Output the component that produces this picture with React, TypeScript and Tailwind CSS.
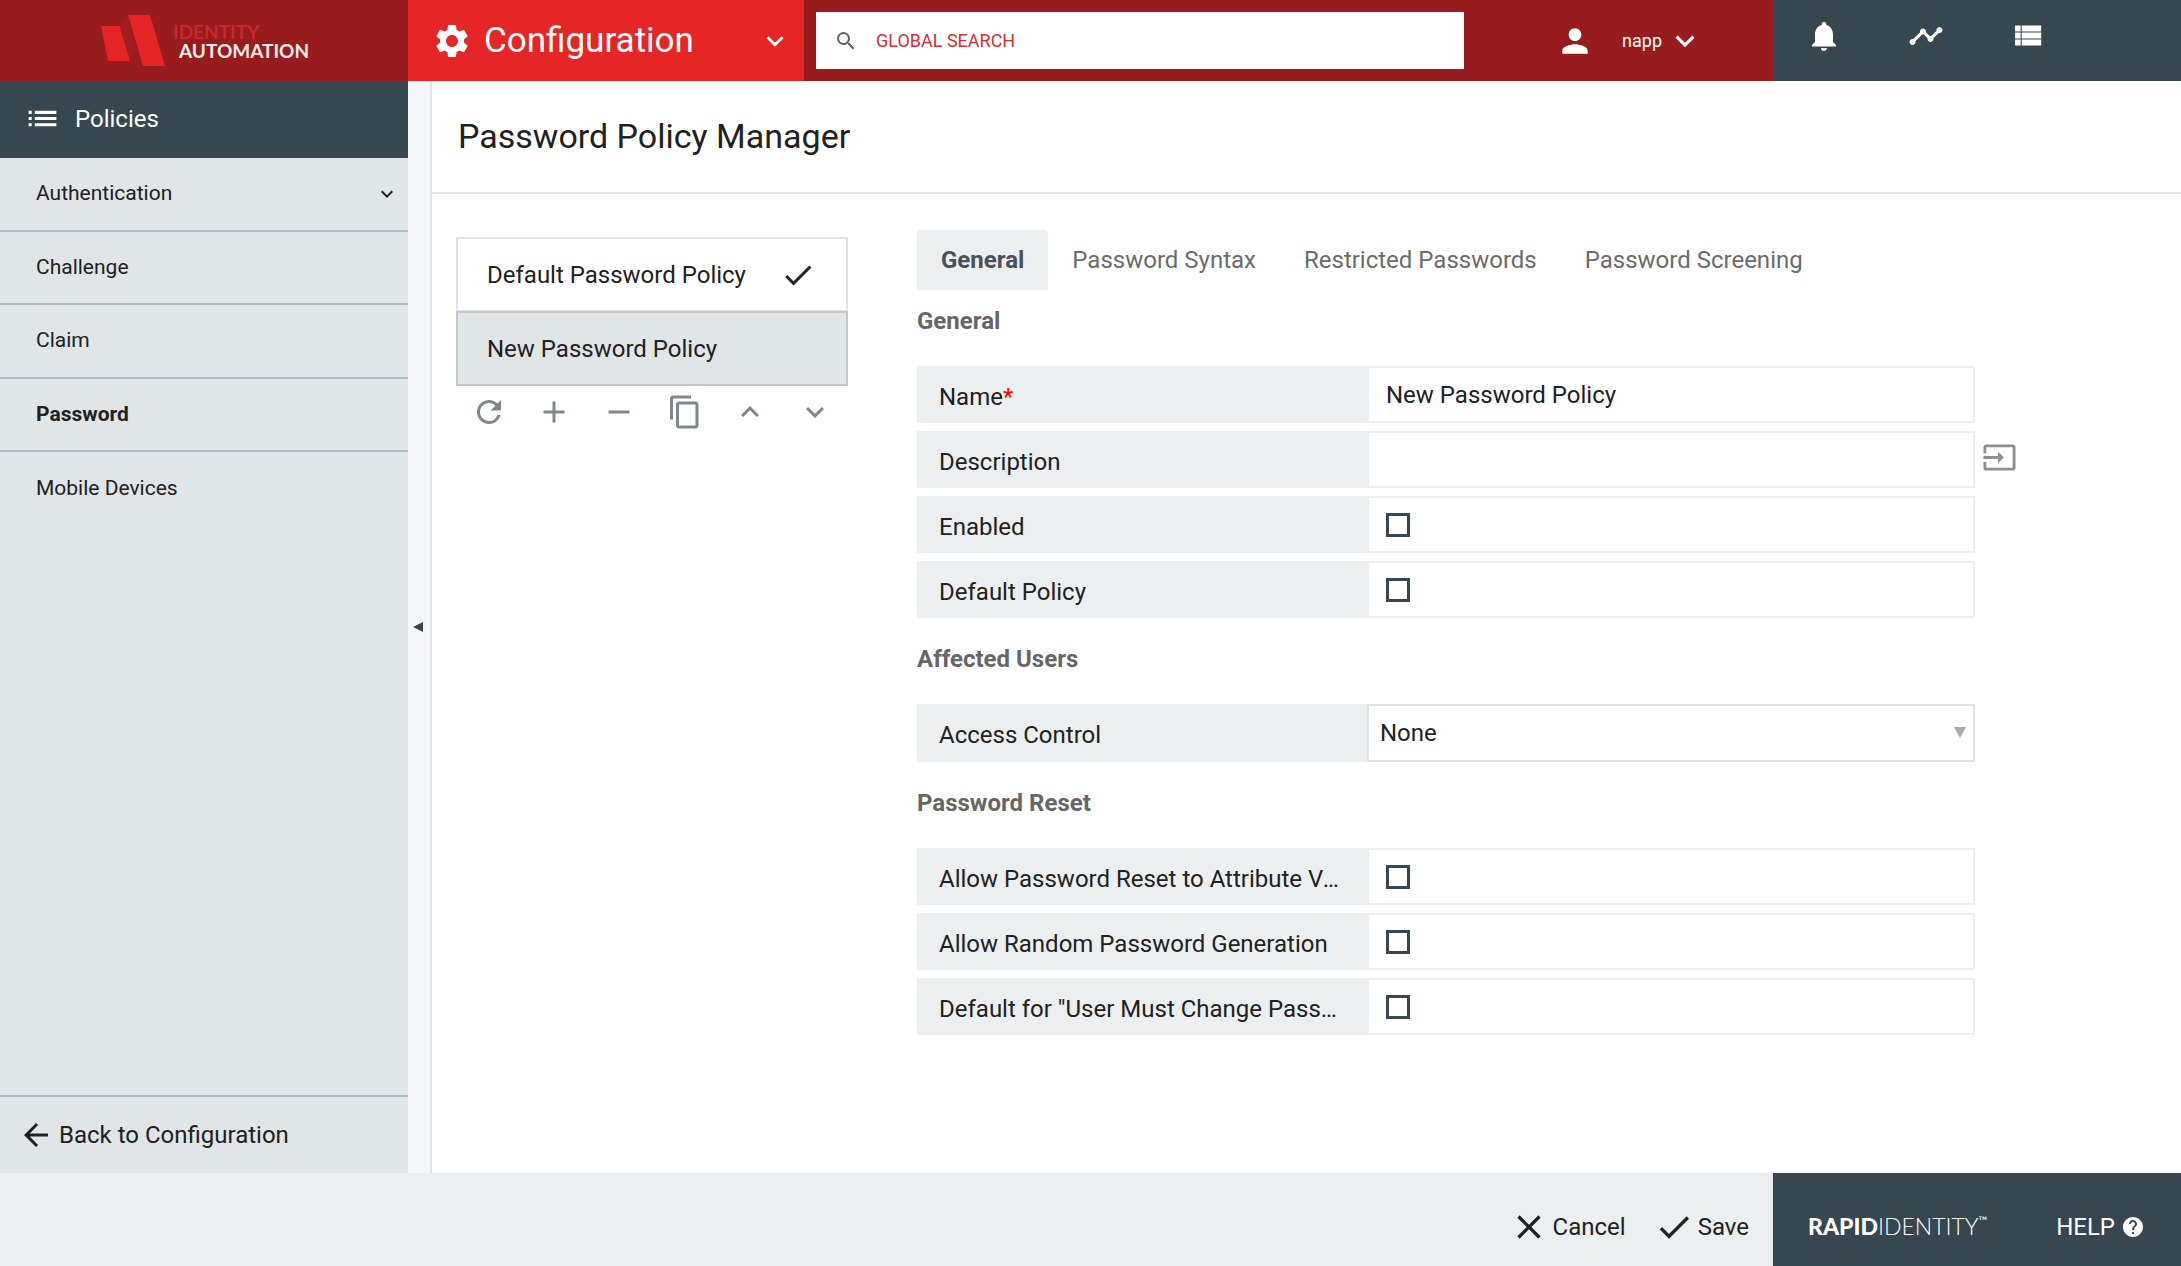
import { useState } from "react"
import type { ReactNode } from "react"
import {
  MdAdd,
  MdArrowBack,
  MdCheck,
  MdClose,
  MdContentCopy,
  MdExpandLess,
  MdExpandMore,
  MdHelp,
  MdInput,
  MdList,
  MdNotifications,
  MdPerson,
  MdRefresh,
  MdRemove,
  MdSearch,
  MdSettings,
  MdTimeline,
} from "react-icons/md"

const menu = ["Authentication", "Challenge", "Claim", "Password", "Mobile Devices"]
const tabs = ["General", "Password Syntax", "Restricted Passwords", "Password Screening"]
const policies = ["Default Password Policy", "New Password Policy"]

const listActions = [
  { label: "Refresh", icon: MdRefresh },
  { label: "Add", icon: MdAdd },
  { label: "Remove", icon: MdRemove },
  { label: "Copy", icon: MdContentCopy },
  { label: "Move up", icon: MdExpandLess },
  { label: "Move down", icon: MdExpandMore },
]

function Logo() {
  return (
    <a href="#" className="flex h-full w-[408px] shrink-0 items-center pl-[101px]">
      <svg viewBox="0 0 64 52" className="h-[52px] w-16" aria-hidden="true">
        <path d="M0 11h19l10 35H7z" fill="#e52526" />
        <path d="M27 0L19 13l10 32 6-9z" fill="#a31d20" />
        <path d="M27 0h22l15 51H42z" fill="#e52526" />
      </svg>
      <span className="flex flex-col pb-px pl-2 pt-[2px] font-[Lato] text-[19px] leading-[19px]">
        <span className="font-bold text-[#c9272a]">IDENTITY</span>
        <span className="pl-[6px] font-bold text-[#fbeaea]">AUTOMATION</span>
      </span>
    </a>
  )
}

function Header() {
  return (
    <header className="flex h-[81px] shrink-0 bg-[#981b1e] text-white">
      <Logo />

      <button className="flex w-[396px] shrink-0 items-center bg-[#e52526] pl-6 pr-3">
        <MdSettings size={40} />
        <span className="pl-3 text-[35px] leading-10">Configuration</span>
        <MdExpandMore size={34} className="ml-auto" />
      </button>

      <div className="flex flex-1 items-center pl-3">
        <label className="flex h-[57px] min-w-0 max-w-[648px] flex-1 items-center bg-white pl-[18px]">
          <MdSearch size={24} className="text-[#616161]" />
          <input
            type="search"
            aria-label="Global search"
            placeholder="GLOBAL SEARCH"
            className="ml-[18px] min-w-0 flex-1 text-[18px] text-[#212121] outline-none placeholder:text-[#d32f2f]"
          />
        </label>
        <button className="ml-auto flex items-center pr-[69px] text-[18px]">
          <MdPerson size={38} />
          <span className="pl-7 pr-1">napp</span>
          <MdExpandMore size={38} />
        </button>
      </div>

      <div className="flex w-[408px] shrink-0 gap-[66px] bg-[#37474f] pb-[10px] pl-[33px]">
        <button aria-label="Notifications">
          <MdNotifications size={36} />
        </button>
        <button aria-label="Activity">
          <MdTimeline size={36} />
        </button>
        <button aria-label="Tasks">
          <svg viewBox="0 0 24 24" className="size-9 fill-current" aria-hidden="true">
            <path d="M3.4 5h3.7v4H3.4zM3.4 9.7h3.7v4H3.4zM3.4 14.4h3.7v4H3.4zM7.8 5h13v4h-13zM7.8 9.7h13v4h-13zM7.8 14.4h13v4h-13z" />
          </svg>
        </button>
      </div>
    </header>
  )
}

function Sidebar() {
  return (
    <nav className="flex w-[408px] shrink-0 flex-col bg-[#e0e5e8] text-[#212121]">
      <div className="flex h-[77px] items-center bg-[#37474f] pb-[2px] pl-6 text-[24px] text-white">
        <MdList size={37} />
        <span className="pl-[14px]">Policies</span>
      </div>
      <ul className="flex-1">
        {menu.map((item) => (
          <li
            key={item}
            className="border-b-2 border-[#b0bec1] odd:h-[74px] even:h-[73px] last:border-0"
          >
            <a
              href="#"
              className={
                "flex h-full items-center justify-between pl-9 pr-[9px] text-[21px] " +
                (item === "Password" ? "font-bold" : "")
              }
            >
              {item}
              {item === "Authentication" && <MdExpandMore size={24} />}
            </a>
          </li>
        ))}
      </ul>
      <a
        href="#"
        className="flex h-[78px] items-center border-t-2 border-[#b0bec1] pl-[18px] text-[24px]"
      >
        <MdArrowBack size={36} />
        <span className="pl-[5px]">Back to Configuration</span>
      </a>
    </nav>
  )
}

function PolicyList() {
  const [selected, setSelected] = useState("New Password Policy")

  return (
    <div className="w-[392px] shrink-0 pt-[43px]">
      {policies.map((policy) => (
        <button
          key={policy}
          onClick={() => setSelected(policy)}
          className={
            "flex h-[75px] w-full items-center justify-between border-2 pl-[29px] pr-[30px] text-[24px] " +
            (policy === selected ? "-mt-px border-[#c4c8cb] bg-[#e0e5e8]" : "border-[#dfe1e3]")
          }
        >
          {policy}
          {policy === "Default Password Policy" && <MdCheck size={36} />}
        </button>
      ))}
      <div className="flex pt-2 text-[#7f878b]">
        {listActions.map(({ label, icon: Icon }) => (
          <button key={label} aria-label={label} className="flex flex-1 justify-center">
            <Icon size={36} />
          </button>
        ))}
      </div>
    </div>
  )
}

function Row({
  id,
  label,
  required,
  action,
  children,
}: {
  id: string
  label: string
  required?: boolean
  action?: ReactNode
  children: ReactNode
}) {
  return (
    <div className="flex min-h-[57px]">
      <div className="flex w-[452px] shrink-0 items-center bg-[#eceff0] pl-[22px] pr-7 pt-1">
        <label htmlFor={id} className="truncate">
          {label}
          {required && <span className="text-[#f00]">*</span>}
        </label>
      </div>
      <div className="flex min-w-0 flex-1">{children}</div>
      <div className="flex w-[42px] shrink-0 items-center justify-end pb-1">{action}</div>
    </div>
  )
}

function TextRow({ id, label, value, required, action }: {
  id: string
  label: string
  value?: string
  required?: boolean
  action?: ReactNode
}) {
  return (
    <Row id={id} label={label} required={required} action={action}>
      <input
        id={id}
        type="text"
        defaultValue={value}
        className="w-full border-y-2 border-r-2 border-[#eceeef] pl-[17px] outline-none"
      />
    </Row>
  )
}

function CheckRow({ id, label }: { id: string; label: string }) {
  return (
    <Row id={id} label={label}>
      <div className="flex w-full items-center border-y-2 border-r-2 border-[#eceeef] pl-[17px]">
        <input
          id={id}
          type="checkbox"
          className="size-6 appearance-none border-3 border-[#37474f] checked:bg-[#37474f]"
        />
      </div>
    </Row>
  )
}

function Section({ title, children }: { title: string; children: ReactNode }) {
  return (
    <section className="pb-[27px]">
      <h2 className="pb-[31px] text-[24px] font-bold leading-7 text-[#666]">{title}</h2>
      <div className="flex flex-col gap-2">{children}</div>
    </section>
  )
}

function PolicyForm() {
  const [tab, setTab] = useState("General")

  return (
    <form className="min-w-0 flex-1 pl-[69px] pr-[164px] pt-9 text-[24px] text-[#212121]">
      <div role="tablist" className="mb-[17px] flex">
        {tabs.map((name) => (
          <button
            key={name}
            type="button"
            role="tab"
            aria-selected={name === tab}
            onClick={() => setTab(name)}
            className={
              "h-[60px] whitespace-nowrap rounded-t px-6 " +
              (name === tab ? "bg-[#eceff0] font-bold text-[#495057]" : "text-[#6b6b6b]")
            }
          >
            {name}
          </button>
        ))}
      </div>

      <Section title="General">
        <TextRow id="name" label="Name" value="New Password Policy" required />
        <TextRow
          id="description"
          label="Description"
          action={
            <button type="button" aria-label="Expand description" className="text-[#8f8f8f]">
              <MdInput size={35} />
            </button>
          }
        />
        <CheckRow id="enabled" label="Enabled" />
        <CheckRow id="default-policy" label="Default Policy" />
      </Section>

      <Section title="Affected Users">
        <Row id="access-control" label="Access Control">
          <div className="relative -ml-0.5 flex h-[58px] flex-1">
            <select
              id="access-control"
              className="w-full appearance-none border-2 border-[#dfe3e5] bg-white pl-[11px] outline-none"
            >
              <option>None</option>
              <option>Role Based</option>
              <option>Attribute Based</option>
            </select>
            <svg
              viewBox="0 0 12 11"
              className="pointer-events-none absolute right-[9px] top-[23px] h-[11px] w-3 fill-[#aaa]"
              aria-hidden="true"
            >
              <path d="M0 0h12L6 11z" />
            </svg>
          </div>
        </Row>
      </Section>

      <Section title="Password Reset">
        <CheckRow id="reset-attribute" label="Allow Password Reset to Attribute Value" />
        <CheckRow id="random" label="Allow Random Password Generation" />
        <CheckRow id="must-change" label={'Default for "User Must Change Password"'} />
      </Section>
    </form>
  )
}

function Footer() {
  return (
    <footer className="flex h-[93px] shrink-0 bg-[#eceff0] text-[24px] text-[#212121]">
      <div className="flex flex-1 items-center justify-end gap-7 pr-6 pt-[14px]">
        <button className="flex items-center gap-1">
          <MdClose size={40} />
          Cancel
        </button>
        <button className="flex items-center gap-1">
          <MdCheck size={40} />
          Save
        </button>
      </div>
      <div className="flex w-[408px] shrink-0 items-center justify-between bg-[#37474f] pl-[35px] pr-9 pt-[14px] text-white">
        <span className="flex font-[Lato] text-[23px]">
          <span className="font-black">RAPID</span>
          <span className="font-light">IDENTITY</span>
          <span className="text-[12px] leading-6">™</span>
        </span>
        <a href="#" className="flex items-center gap-[6px]">
          HELP
          <MdHelp size={24} />
        </a>
      </div>
    </footer>
  )
}

export default function App() {
  return (
    <div className="flex min-h-screen flex-col bg-white font-[Roboto,sans-serif] text-[#212121]">
      <Header />
      <div className="flex flex-1">
        <Sidebar />

        {/* sidebar collapse handle */}
        <button
          aria-label="Collapse sidebar"
          className="flex w-6 shrink-0 items-center border-r-2 border-[#e0e3e5] bg-[#f5f7f9] pl-[5px]"
        >
          <svg viewBox="0 0 10 10" className="size-[10px] fill-[#37474f]" aria-hidden="true">
            <path d="M10 0v10L0 5z" />
          </svg>
        </button>

        <main className="flex min-w-0 flex-1 flex-col">
          <h1 className="flex h-[113px] items-center border-b-2 border-[#e2e5e6] pl-[26px] text-[34px]">
            Password Policy Manager
          </h1>
          <div className="flex flex-1 pl-6">
            <PolicyList />
            <PolicyForm />
          </div>
        </main>
      </div>
      <Footer />
    </div>
  )
}
